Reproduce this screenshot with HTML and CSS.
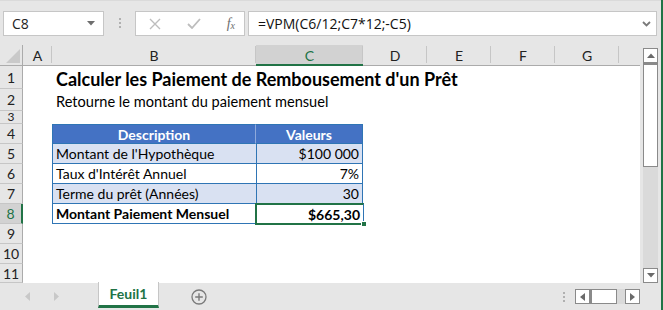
FILE: index.html
```html
<!DOCTYPE html>
<html lang="fr">
<head>
<meta charset="utf-8">
<title>Excel</title>
<link rel="stylesheet" href="styles.css">
</head>
<body>
<div class="app">
  <div class="fbar">
    <div class="namebox">
      <span class="nb-text">C8</span>
      <svg class="nb-caret" width="8" height="5" viewBox="0 0 8 5"><path d="M0 0h8L4 4.5z" fill="#6e6e6e"/></svg>
    </div>
    <div class="vdots"><i></i><i></i><i></i></div>
    <div class="fbtns">
      <svg width="12" height="12" viewBox="0 0 12 12"><path d="M1 1L11 11M11 1L1 11" stroke="#bdbdbd" stroke-width="1.4" fill="none"/></svg>
      <svg width="14" height="11" viewBox="0 0 14 11"><path d="M1 6L5 10L13 1" stroke="#bdbdbd" stroke-width="1.8" fill="none"/></svg>
      <span class="fx">f<sub>x</sub></span>
    </div>
    <div class="formula">
      <span class="f-text">=VPM(C6/12;C7*12;-C5)</span>
      <svg class="f-chev" width="9" height="6" viewBox="0 0 9 6"><path d="M1 1L4.5 4.5L8 1" stroke="#7a7a7a" stroke-width="1.8" fill="none"/></svg>
    </div>
  </div>

  <div class="main">
    <div class="sheet">
      <!-- header row -->
      <div class="corner"><svg width="14" height="14" viewBox="0 0 14 14"><path d="M14 0V14H0z" fill="#c9c9c9"/></svg></div>
      <div class="ch">A</div>
      <div class="ch">B</div>
      <div class="ch sel">C</div>
      <div class="ch">D</div>
      <div class="ch">E</div>
      <div class="ch">F</div>
      <div class="ch">G</div>
      <div class="ch last"></div>

      <!-- row 1 -->
      <div class="rh">1</div><div class="c"></div>
      <div class="c title">Calculer les Paiement de Rembousement d'un Prêt</div>
      <div class="c"></div><div class="c"></div><div class="c"></div><div class="c"></div><div class="c"></div><div class="c"></div>

      <!-- row 2 -->
      <div class="rh">2</div><div class="c"></div>
      <div class="c sub">Retourne le montant du paiement mensuel</div>
      <div class="c"></div><div class="c"></div><div class="c"></div><div class="c"></div><div class="c"></div><div class="c"></div>

      <!-- row 3 -->
      <div class="rh small">3</div><div class="c"></div><div class="c"></div><div class="c"></div><div class="c"></div><div class="c"></div><div class="c"></div><div class="c"></div><div class="c"></div>

      <!-- row 4 -->
      <div class="rh">4</div><div class="c"></div>
      <div class="c th th-l">Description</div>
      <div class="c th th-r">Valeurs</div>
      <div class="c"></div><div class="c"></div><div class="c"></div><div class="c"></div><div class="c"></div>

      <!-- row 5 -->
      <div class="rh">5</div><div class="c"></div>
      <div class="c td band">Montant de l'Hypothèque</div>
      <div class="c td band num">$100 000</div>
      <div class="c"></div><div class="c"></div><div class="c"></div><div class="c"></div><div class="c"></div>

      <!-- row 6 -->
      <div class="rh">6</div><div class="c"></div>
      <div class="c td">Taux d'Intérêt Annuel</div>
      <div class="c td num">7%</div>
      <div class="c"></div><div class="c"></div><div class="c"></div><div class="c"></div><div class="c"></div>

      <!-- row 7 -->
      <div class="rh">7</div><div class="c"></div>
      <div class="c td band">Terme du prêt (Années)</div>
      <div class="c td band num">30</div>
      <div class="c"></div><div class="c"></div><div class="c"></div><div class="c"></div><div class="c"></div>

      <!-- row 8 -->
      <div class="rh sel">8</div><div class="c"></div>
      <div class="c td bold lastrow">Montant Paiement Mensuel</div>
      <div class="c td num bold lastrow active">$665,30<span class="handle"></span></div>
      <div class="c"></div><div class="c"></div><div class="c"></div><div class="c"></div><div class="c"></div>

      <div class="rh">9</div><div class="c"></div><div class="c"></div><div class="c"></div><div class="c"></div><div class="c"></div><div class="c"></div><div class="c"></div><div class="c"></div>
      <div class="rh">10</div><div class="c"></div><div class="c"></div><div class="c"></div><div class="c"></div><div class="c"></div><div class="c"></div><div class="c"></div><div class="c"></div>
      <div class="rh">11</div><div class="c"></div><div class="c"></div><div class="c"></div><div class="c"></div><div class="c"></div><div class="c"></div><div class="c"></div><div class="c"></div>
    </div>

    <div class="vscroll">
      <div class="sb-btn"><svg width="8" height="5" viewBox="0 0 8 5"><path d="M0 5h8L4 0.5z" fill="#6a6a6a"/></svg></div>
      <div class="sb-thumb"></div>
      <div class="sb-track"></div>
      <div class="sb-btn"><svg width="8" height="5" viewBox="0 0 8 5"><path d="M0 0h8L4 4.5z" fill="#6a6a6a"/></svg></div>
    </div>
  </div>

  <div class="tabs">
    <div class="nav">
      <svg width="6" height="9" viewBox="0 0 6 9"><path d="M5 0V9L0 4.5z" fill="#c8c8c8"/></svg>
      <svg width="6" height="9" viewBox="0 0 6 9"><path d="M1 0V9L6 4.5z" fill="#c8c8c8"/></svg>
    </div>
    <div class="tab">Feuil1</div>
    <div class="add">
      <svg width="16" height="16" viewBox="0 0 16 16"><circle cx="8" cy="8" r="7" fill="none" stroke="#7a7a7a" stroke-width="1.3"/><path d="M8 4.2V11.8M4.2 8H11.8" stroke="#7a7a7a" stroke-width="1.4"/></svg>
    </div>
    <div class="spacer"></div>
    <div class="vdots small"><i></i><i></i><i></i></div>
    <div class="hscroll">
      <div class="hs-btn"><svg width="5" height="8" viewBox="0 0 5 8"><path d="M5 0V8L0 4z" fill="#6a6a6a"/></svg></div>
      <div class="hs-thumb"></div>
      <div class="hs-track"></div>
      <div class="hs-btn"><svg width="5" height="8" viewBox="0 0 5 8"><path d="M0 0V8L5 4z" fill="#6a6a6a"/></svg></div>
    </div>
  </div>
</div>
</body>
</html>
```

FILE: styles.css
```css
* { box-sizing: border-box; }
html, body { margin: 0; padding: 0; }
body { width: 663px; height: 310px; overflow: hidden; background: #e6e6e6; }

.app {
  width: 663px;
  height: 310px;
  background: #e6e6e6;
  border-right: 2px solid #217346;
  display: flex;
  flex-direction: column;
  font-family: "Segoe UI", "Open Sans", "Noto Sans", sans-serif;
  color: #000;
}

/* formula bar */
.fbar {
  height: 45px;
  display: flex;
  align-items: flex-start;
  padding: 10px 0 0 3px;
  border-top: 1px solid #dadada;
}
.namebox {
  width: 101px;
  height: 25px;
  background: #fff;
  border: 1px solid #c6c6c6;
  display: flex;
  align-items: center;
  justify-content: space-between;
  padding: 0 8px 0 8px;
  font-size: 14px;
}
.nb-text { color: #222; }
.vdots {
  width: 31px;
  display: flex;
  flex-direction: column;
  align-items: center;
  gap: 2px;
  padding-top: 7px;
}
.vdots i { display: block; width: 2px; height: 2px; background: #b0b0b0; }
.fbtns {
  width: 110px;
  height: 25px;
  background: #fff;
  border: 1px solid #c6c6c6;
  display: flex;
  align-items: center;
  justify-content: space-between;
  padding: 0 9px 0 13px;
}
.fx {
  font-family: "Liberation Serif", "DejaVu Serif", serif;
  font-style: italic;
  font-size: 14px;
  color: #6e6e6e;
  line-height: 1;
}
.fx sub { font-size: 10px; vertical-align: -1px; }
.formula {
  margin-left: 3px;
  width: 409px;
  height: 25px;
  background: #fff;
  border: 1px solid #c6c6c6;
  display: flex;
  align-items: center;
  justify-content: space-between;
  padding: 0 5px 0 9px;
  font-size: 14px;
}
.f-text { color: #111; }

/* main */
.main { display: flex; height: 238px; }
.sheet {
  width: 640px;
  display: grid;
  grid-template-columns: 23px 29px 204px 107px 64px 64px 64px 64px 21px;
  grid-template-rows: 21px 23px 22px 13px 20px 20px 20px 20px 20px 20px 20px 19px;
  font-family: Lato, "Open Sans", sans-serif;
  background: #fff;
  border-right: 1px solid #ababab;
  border-bottom: 1px solid #ababab;
}
.corner {
  background: #e6e6e6;
  border-right: 1px solid #ababab;
  border-bottom: 1px solid #ababab;
  display: flex;
  align-items: flex-end;
  justify-content: flex-end;
  padding: 0 2px 2px 0;
}
.ch {
  background: #e6e6e6;
  border-bottom: 1px solid #ababab;
  position: relative;
  display: flex;
  align-items: center;
  justify-content: center;
  font-size: 14px;
  color: #222;
  padding-top: 1px;
}
.ch::after {
  content: "";
  position: absolute;
  right: 0;
  top: 1px;
  bottom: 2px;
  width: 1px;
  background: #c6c6c6;
}
.ch.last::after { display: none; }
.ch.sel {
  background: #d2d2d2;
  color: #217346;
  border-bottom: 2px solid #217346;
}
.rh {
  background: #e6e6e6;
  border-right: 1px solid #ababab;
  border-bottom: 1px solid #c6c6c6;
  display: flex;
  align-items: center;
  justify-content: center;
  font-size: 14px;
  color: #222;
}
.rh.small { font-size: 12px; line-height: 12px; align-items: flex-start; }
.rh.sel {
  background: #d2d2d2;
  color: #217346;
  border-right: 2px solid #217346;
}
.c {
  background: #fff;
  white-space: nowrap;
  display: flex;
  align-items: center;
  min-width: 0;
  font-size: 14px;
}
.title {
  font-weight: 700;
  font-size: 18px;
  padding-left: 4px;
  padding-top: 3px;
  overflow: visible;
  z-index: 1;
}
.sub {
  font-size: 14.6px;
  padding-left: 4px;
  padding-top: 3px;
  z-index: 1;
}
.th {
  background: #4472c4;
  color: #fff;
  font-weight: 700;
  justify-content: center;
  border-top: 1px solid #2f75b5;
  border-bottom: 1px solid #2f75b5;
}
.th-l { border-left: 1px solid #2f75b5; border-right: 1px solid #8ea9db; }
.th-r { border-right: 1px solid #2f75b5; }
.td {
  padding: 0 3px 0 3px;
  border-left: 1px solid #2f75b5;
  border-bottom: 1px solid #2f75b5;
}
.td.num { justify-content: flex-end; border-right: 1px solid #2f75b5; }
.band { background: #d9e1f2; }
.bold { font-weight: 700; }
.active {
  position: relative;
  border: 2px solid #217346;
  margin: -1px -1px -1px -1px;
  padding-right: 3px;
}
.handle {
  position: absolute;
  right: -4px;
  bottom: -4px;
  width: 6px;
  height: 6px;
  background: #217346;
  border: 1px solid #fff;
}

/* vertical scrollbar */
.vscroll {
  width: 21px;
  padding: 3px 0 0 3px;
  display: flex;
  flex-direction: column;
}
.sb-btn {
  width: 15px;
  height: 15px;
  background: #fff;
  border: 1px solid #8a8a8a;
  display: flex;
  align-items: center;
  justify-content: center;
}
.sb-thumb {
  width: 15px;
  height: 104px;
  background: #fff;
  border: 1px solid #8a8a8a;
  border-top-width: 2px;
}
.sb-track { width: 15px; flex: 1; background: #dadada; }

/* tabs */
.tabs {
  flex: 1;
  display: flex;
  align-items: stretch;
  padding-left: 24px;
}
.nav {
  width: 74px;
  display: flex;
  align-items: center;
  gap: 22px;
  padding-left: 1px;
}
.tab {
  width: 61px;
  background: #fff;
  border-left: 1px solid #c6c6c6;
  border-right: 1px solid #c6c6c6;
  border-bottom: 3px solid #217346;
  margin-bottom: 2px;
  margin-top: -1px;
  display: flex;
  align-items: center;
  justify-content: center;
  font-family: Lato, "Open Sans", sans-serif;
  font-weight: 700;
  font-size: 14px;
  color: #217346;
}
.add {
  width: 80px;
  display: flex;
  align-items: center;
  justify-content: center;
}
.spacer { flex: 1; }
.vdots.small { width: 14px; padding-top: 9px; gap: 2px; }
.hscroll {
  display: flex;
  align-items: center;
  padding: 0 21px 0 4px;
}
.hs-btn {
  width: 15px;
  height: 15px;
  background: #fff;
  border: 1px solid #8a8a8a;
  display: flex;
  align-items: center;
  justify-content: center;
}
.hs-thumb {
  width: 27px;
  height: 15px;
  background: #fff;
  border: 1px solid #8a8a8a;
  border-left-width: 2px;
}
.hs-track { width: 8px; height: 15px; background: #dadada; }
```
